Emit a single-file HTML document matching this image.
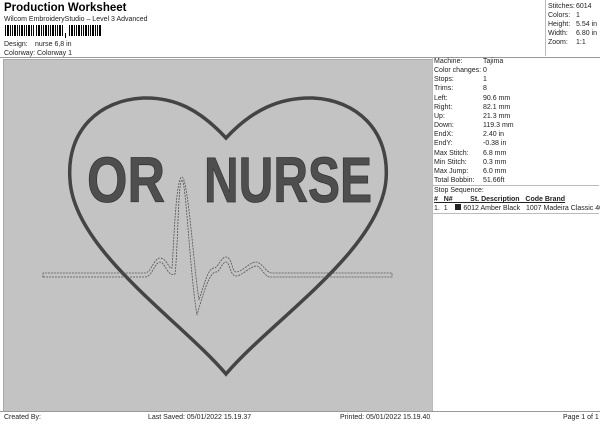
<html><head><style>
body{margin:0;width:600px;height:424px;background:#fff;font-family:"Liberation Sans",sans-serif;color:#222;position:relative;overflow:hidden}
.a{position:absolute;font-size:7px;white-space:nowrap;line-height:9px}
.r{position:absolute;left:434px;font-size:7px;line-height:9px}
.v{position:absolute;left:483px;font-size:7px;line-height:9px}
</style></head><body>
<div style="position:absolute;left:0;top:0;width:600px;height:57px;border-bottom:1px solid #999"></div>
<div style="position:absolute;left:545px;top:0;width:54px;height:56px;border-left:1px solid #bbb;border-right:1px solid #bbb"></div>
<div class="a" style="left:4px;top:2px;font-size:11.5px;line-height:13px;font-weight:bold;color:#000">Production Worksheet</div>
<div class="a" style="left:4px;top:15px">Wilcom EmbroideryStudio – Level 3 Advanced</div>
<svg style="position:absolute;left:5px;top:25px" width="100" height="13">
<g fill="#000">
<rect x="0" y="0" width="1" height="11"/><rect x="2" y="0" width="2" height="11"/><rect x="5" y="0" width="1" height="11"/><rect x="7" y="0" width="1" height="11"/><rect x="9" y="0" width="2" height="11"/><rect x="12" y="0" width="1" height="11"/><rect x="14" y="0" width="1" height="11"/><rect x="16" y="0" width="2" height="11"/><rect x="19" y="0" width="1" height="11"/><rect x="21" y="0" width="1" height="11"/><rect x="23" y="0" width="2" height="11"/><rect x="26" y="0" width="1" height="11"/><rect x="28" y="0" width="1" height="11"/><rect x="31" y="0" width="1" height="11"/><rect x="33" y="0" width="2" height="11"/><rect x="36" y="0" width="1" height="11"/><rect x="38" y="0" width="1" height="11"/><rect x="40" y="0" width="2" height="11"/><rect x="43" y="0" width="1" height="11"/><rect x="45" y="0" width="1" height="11"/><rect x="47" y="0" width="2" height="11"/><rect x="50" y="0" width="1" height="11"/><rect x="52" y="0" width="1" height="11"/><rect x="54" y="0" width="2" height="11"/><rect x="57" y="0" width="1" height="11"/>
<rect x="60" y="8" width="1" height="5"/>
<rect x="64" y="0" width="1" height="11"/><rect x="66" y="0" width="2" height="11"/><rect x="69" y="0" width="1" height="11"/><rect x="71" y="0" width="1" height="11"/><rect x="73" y="0" width="2" height="11"/><rect x="76" y="0" width="1" height="11"/><rect x="78" y="0" width="1" height="11"/><rect x="80" y="0" width="2" height="11"/><rect x="83" y="0" width="1" height="11"/><rect x="85" y="0" width="1" height="11"/><rect x="87" y="0" width="2" height="11"/><rect x="90" y="0" width="1" height="11"/><rect x="92" y="0" width="1" height="11"/><rect x="94" y="0" width="2" height="11"/></g></svg>
<div class="a" style="left:4px;top:40px">Design:</div><div class="a" style="left:35px;top:40px">nurse 6,8 in</div>
<div class="a" style="left:4px;top:49px">Colorway:</div><div class="a" style="left:37px;top:49px">Colorway 1</div>
<div class="a" style="left:548px;top:2px">Stitches:</div><div class="a" style="left:576px;top:2px">6014</div>
<div class="a" style="left:548px;top:11px">Colors:</div><div class="a" style="left:576px;top:11px">1</div>
<div class="a" style="left:548px;top:20px">Height:</div><div class="a" style="left:576px;top:20px">5.54 in</div>
<div class="a" style="left:548px;top:29px">Width:</div><div class="a" style="left:576px;top:29px">6.80 in</div>
<div class="a" style="left:548px;top:38px">Zoom:</div><div class="a" style="left:576px;top:38px">1:1</div>

<div style="position:absolute;left:3px;top:59px;width:428px;height:351px;background:#c3c3c3;border:1px solid #aaa"></div>
<div style="position:absolute;left:432px;top:57px;width:167px;height:353px;border-left:1px solid #bbb;border-right:1px solid #bbb"></div>
<svg style="position:absolute;left:0;top:0" width="432" height="412">
<g fill="none" stroke="#444" stroke-width="3.5">
<path d="M226,138 C200,110 175,97 143,98 C100,100 66,130 70,180 C74,250 180,320 226,374 C272,320 380,250 386,180 C390,130 356,100 313,98 C280,97 252,110 226,138 Z"/>
</g>
<g fill="none" stroke="#555" stroke-width="0.8" stroke-dasharray="2,1">
<path d="M43,277 L145,277 C152,277 155,262 160,262 C165,262 168,278 175,274 C178,250 178,180 182,180 C186,180 190,275 197,315 C204,290 210,272 216,272 C220,272 222,262 226,262 C230,262 230,276 236,276 C242,276 250,266 257,266 C260,266 265,277 270,277 L392,277 L392,273 L272,273 C266,273 262,262 256,262 C250,262 242,272 236,272 C232,272 232,257 226,257 C221,257 218,268 214,268 C208,268 204,285 199,300 C194,270 188,177 182,177 C176,177 174,240 172,268 C169,270 167,258 160,258 C154,258 151,273 145,273 L43,273 Z"/>
</g>
<text x="87" y="202" font-family="Liberation Sans,sans-serif" font-weight="bold" font-size="64" fill="#4e4e4e" stroke="#333" stroke-width="0.8" textLength="78" lengthAdjust="spacingAndGlyphs">OR</text>
<text x="204" y="202" font-family="Liberation Sans,sans-serif" font-weight="bold" font-size="64" fill="#4e4e4e" stroke="#333" stroke-width="0.8" textLength="168" lengthAdjust="spacingAndGlyphs">NURSE</text>
</svg>

<div class="r" style="top:57px">Machine:</div><div class="v" style="top:57px">Tajima</div>
<div class="r" style="top:66px">Color changes:</div><div class="v" style="top:66px">0</div>
<div class="r" style="top:75px">Stops:</div><div class="v" style="top:75px">1</div>
<div class="r" style="top:84px">Trims:</div><div class="v" style="top:84px">8</div>
<div class="r" style="top:94px">Left:</div><div class="v" style="top:94px">90.6 mm</div>
<div class="r" style="top:103px">Right:</div><div class="v" style="top:103px">82.1 mm</div>
<div class="r" style="top:112px">Up:</div><div class="v" style="top:112px">21.3 mm</div>
<div class="r" style="top:121px">Down:</div><div class="v" style="top:121px">119.3 mm</div>
<div class="r" style="top:130px">EndX:</div><div class="v" style="top:130px">2.40 in</div>
<div class="r" style="top:139px">EndY:</div><div class="v" style="top:139px">-0.38 in</div>
<div class="r" style="top:149px">Max Stitch:</div><div class="v" style="top:149px">6.8 mm</div>
<div class="r" style="top:158px">Min Stitch:</div><div class="v" style="top:158px">0.3 mm</div>
<div class="r" style="top:167px">Max Jump:</div><div class="v" style="top:167px">6.0 mm</div>
<div class="r" style="top:176px">Total Bobbin:</div><div class="v" style="top:176px">51.66ft</div>
<div style="position:absolute;left:433px;top:185px;width:166px;border-top:1px solid #bbb"></div>
<div class="r" style="top:186px">Stop Sequence:</div>
<div class="a" style="left:434px;top:195px;font-weight:bold;text-decoration:underline">#&nbsp;&nbsp; N#&nbsp;&nbsp;&nbsp;&nbsp;&nbsp;&nbsp;&nbsp;&nbsp; St. Description&nbsp;&nbsp; Code Brand</div>
<div class="a" style="left:434px;top:204px">1.&nbsp; 1&nbsp;&nbsp;&nbsp; <span style="display:inline-block;width:6px;height:6px;background:#222"></span> 6012 Amber Black&nbsp;&nbsp; 1007 Madeira Classic 40</div>
<div style="position:absolute;left:433px;top:213px;width:166px;border-top:1px solid #bbb"></div>
<div style="position:absolute;left:0;top:411px;width:600px;border-top:1px solid #999"></div>
<div class="a" style="left:4px;top:413px">Created By:</div>
<div class="a" style="left:148px;top:413px">Last Saved: 05/01/2022 15.19.37</div>
<div class="a" style="left:340px;top:413px">Printed: 05/01/2022 15.19.40</div>
<div class="a" style="left:563px;top:413px">Page 1 of 1</div>
</body></html>
